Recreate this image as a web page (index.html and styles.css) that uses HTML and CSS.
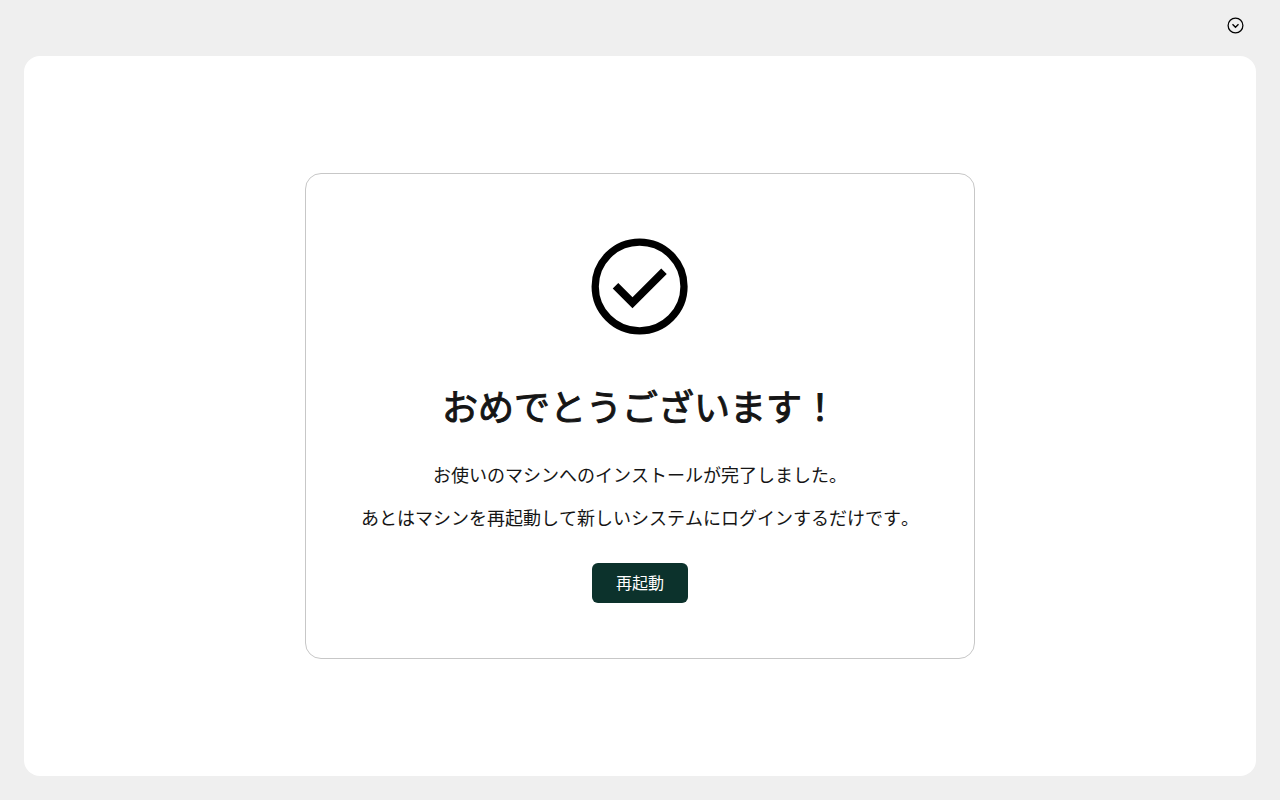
FILE: index.html
```html
<!DOCTYPE html>
<html lang="ja">
<head>
<meta charset="utf-8">
<title>インストール完了</title>
<link rel="stylesheet" href="styles.css">
</head>
<body>
<div class="page">
  <header class="masthead">
    <button class="menu-toggle" type="button" aria-label="オプション">
      <svg class="menu-icon" viewBox="0 0 20 20" aria-hidden="true"><g fill="none" stroke="currentColor"><circle cx="9.500" cy="9.500" r="7.400" stroke-width="1.250"/><path stroke-width="1.400" d="m6.500 8.200 3 3 3-3"/></g></svg>
    </button>
  </header>
  <main class="main">
    <section class="card">
      <svg class="success-icon" viewBox="0 0 120 120" aria-hidden="true"><g fill="none" stroke="currentColor" stroke-width="7.300"><path stroke-width="7.800" d="M35.500 59.800 52.500 76.800 84 45.300"/><circle cx="59.600" cy="60.500" r="44.400"/></g></svg>
      <h1 class="title">おめでとうございます！</h1>
      <div class="message">
        <p class="text">お使いのマシンへのインストールが完了しました。</p>
        <p class="text">あとはマシンを再起動して新しいシステムにログインするだけです。</p>
      </div>
      <button class="primary" type="button">再起動</button>
    </section>
  </main>
</div>
</body>
</html>
```
FILE: styles.css
```css
* { box-sizing: border-box; }
body {
  margin: 0;
  background: #efefef;
  color: #151515;
  font-family: Lato, "Noto Sans CJK JP", sans-serif;
  font-kerning: none;
}
.page {
  display: flex;
  flex-direction: column;
  min-height: 100vh;
  padding: 0 24px 24px;
}
.masthead {
  display: flex;
  justify-content: flex-end;
  align-items: center;
  height: 56px;
  padding: 0 10px 4px 0;
}
.menu-toggle {
  display: flex;
  padding: 0;
  border: 0;
  background: none;
  color: #000;
}
.menu-icon { width: 20px; height: 20px; }
.main {
  flex: 1;
  display: flex;
  align-items: center;
  justify-content: center;
  border-radius: 16px;
  background: #fff;
}
.card {
  display: flex;
  flex-direction: column;
  align-items: center;
  padding: 52px 55px 55px;
  border: 1px solid #c7c7c7;
  border-radius: 16px;
}
.success-icon { width: 120px; height: 120px; color: #000; }
.title {
  margin: 34px 0 0;
  font-size: 36px;
  line-height: 54px;
  font-weight: 400;
  -webkit-text-stroke: 1px currentColor;
}
.message {
  display: flex;
  flex-direction: column;
  gap: 16px;
  margin: 28px 0 31px;
}
.text {
  margin: 0;
  font-size: 18px;
  line-height: 27px;
  text-align: center;
}
.primary {
  padding: 8px 24px;
  border: 0;
  border-radius: 6px;
  background: #0c322c;
  color: #fff;
  font: inherit;
  font-size: 16px;
  line-height: 24px;
}
```
